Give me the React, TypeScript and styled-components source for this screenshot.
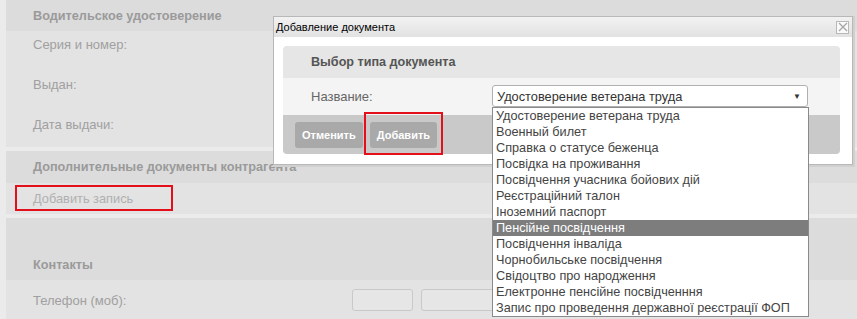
import styled, { createGlobalStyle } from "styled-components";

const GlobalStyle = createGlobalStyle`
  html, body {
    margin: 0;
    padding: 0;
    background: #ebebeb;
    font-family: "Liberation Sans", Arial, sans-serif;
    overflow: hidden;
  }
`;

const options = [
  "Удостоверение ветерана труда",
  "Военный билет",
  "Справка о статусе беженца",
  "Посвідка на проживання",
  "Посвідчення учасника бойових дій",
  "Реєстраційний талон",
  "Іноземний паспорт",
  "Пенсійне посвідчення",
  "Посвідчення інваліда",
  "Чорнобильське посвідчення",
  "Свідоцтво про народження",
  "Електронне пенсійне посвідченння",
  "Запис про проведення державної реєстрації ФОП",
];

const App = () => {
  return (
    <StPage>
      <GlobalStyle />

      <StSection>
        <StHeader>Водительское удостоверение</StHeader>
        <StBody $height={116}>
          <StRow>Серия и номер:</StRow>
          <StRow>Выдан:</StRow>
          <StRow>Дата выдачи:</StRow>
        </StBody>
      </StSection>

      <StSection>
        <StHeader $height={32}>Дополнительные документы контрагента</StHeader>
        <StLinkRow>Добавить запись</StLinkRow>
      </StSection>

      <StSection>
        <StHeader $height={62} $alignEnd>
          Контакты
        </StHeader>
        <StFieldRow>
          <StFieldLabel>Телефон (моб):</StFieldLabel>
          <StFakeInput $width={61} />
          <StFakeInput $width={120} />
        </StFieldRow>
      </StSection>

      <StModal>
        <StTitleBar>
          <span>Добавление документа</span>
          <StClose>
            <svg width="10" height="10" viewBox="0 0 10 10">
              <path d="M1 1 L9 9 M9 1 L1 9" stroke="#a8a8a8" strokeWidth="1.4" />
            </svg>
          </StClose>
        </StTitleBar>
        <StPanel>
          <StPanelHeader>Выбор типа документа</StPanelHeader>
          <StPanelRow>
            <StPanelLabel>Название:</StPanelLabel>
            <StSelect>
              <span>Удостоверение ветерана труда</span>
              <StArrow>▼</StArrow>
            </StSelect>
          </StPanelRow>
          <StPanelFooter>
            <StButton>Отменить</StButton>
            <StButton>Добавить</StButton>
          </StPanelFooter>
        </StPanel>
      </StModal>

      <StList>
        {options.map((o, i) => (
          <StOption key={o} $active={i === 7}>
            {o}
          </StOption>
        ))}
      </StList>

      <StMark style={{ left: 15, top: 185, width: 158, height: 26 }} />
      <StMark style={{ left: 364, top: 112, width: 79, height: 43 }} />
    </StPage>
  );
};

export default App;

const StPage = styled.div`
  position: relative;
  width: 857px;
  height: 319px;
  padding-left: 6px;
  box-sizing: border-box;
  overflow: hidden;
`;

const StSection = styled.div`
  margin-bottom: 4px;
  background: #e3e3e3;
`;

const StHeader = styled.div<{ $height?: number; $alignEnd?: boolean }>`
  height: ${(p) => p.$height ?? 31}px;
  box-sizing: border-box;
  display: flex;
  align-items: ${(p) => (p.$alignEnd ? "flex-end" : "center")};
  padding: ${(p) => (p.$alignEnd ? "0 0 8px 27px" : "0 0 0 27px")};
  background: #dcdcdc;
  color: #9a9a9a;
  font-size: 12.7px;
  font-weight: bold;
  white-space: nowrap;
`;

const StBody = styled.div<{ $height: number }>`
  height: ${(p) => p.$height}px;
  overflow: hidden;
`;

const StRow = styled.div`
  height: 40px;
  box-sizing: border-box;
  padding: 6px 0 0 27px;
  line-height: 16px;
  font-size: 13px;
  color: #a0a0a0;
`;

const StLinkRow = styled.div`
  height: 31px;
  display: flex;
  align-items: center;
  padding-left: 27px;
  font-size: 12.8px;
  color: #b0b0b0;
`;

const StFieldRow = styled.div`
  height: 40px;
  display: flex;
  align-items: center;
  padding-left: 27px;
  gap: 8px;
`;

const StFieldLabel = styled.div`
  width: 311px;
  font-size: 13px;
  color: #a0a0a0;
`;

const StFakeInput = styled.div<{ $width: number }>`
  width: ${(p) => p.$width}px;
  height: 22px;
  box-sizing: border-box;
  border: 1px solid #c9c9c9;
  border-radius: 3px;
  background: #e6e6e6;
`;

const StModal = styled.div`
  position: absolute;
  left: 273px;
  top: 16px;
  width: 580px;
  height: 149px;
  box-sizing: border-box;
  background: #fff;
  border: 1px solid #b8b8b8;
  box-shadow: 1px 1px 0 1px #d0d0d0;
`;

const StTitleBar = styled.div`
  height: 20px;
  display: flex;
  align-items: center;
  justify-content: space-between;
  padding: 0 3px 0 2px;
  background: linear-gradient(#f2f2f2, #e2e2e2);
  font-size: 11px;
  color: #000;
`;

const StClose = styled.div`
  width: 11px;
  height: 11px;
  border: 1px solid #b8b8b8;
  background: #fafafa;
  display: flex;
  align-items: center;
  justify-content: center;
`;

const StPanel = styled.div`
  margin: 9px 0 0 9px;
  width: 557px;
  border-radius: 4px;
  overflow: hidden;
`;

const StPanelHeader = styled.div`
  height: 32px;
  display: flex;
  align-items: center;
  padding-left: 28px;
  background: #e6e6e6;
  color: #555;
  font-size: 12.6px;
  font-weight: bold;
`;

const StPanelRow = styled.div`
  height: 37px;
  display: flex;
  align-items: center;
  padding-left: 28px;
  background: #f4f4f4;
`;

const StPanelLabel = styled.div`
  width: 181px;
  font-size: 13px;
  color: #666;
`;

const StSelect = styled.div`
  width: 316px;
  height: 22px;
  box-sizing: border-box;
  margin-top: -1px;
  display: flex;
  align-items: center;
  justify-content: space-between;
  padding: 0 6px 0 4px;
  background: #fff;
  border: 1px solid #b0b0b0;
  border-radius: 3px;
  font-size: 12.8px;
  color: #333;
`;

const StArrow = styled.span`
  font-size: 8px;
  color: #333;
`;

const StPanelFooter = styled.div`
  height: 39px;
  display: flex;
  align-items: center;
  gap: 7px;
  padding-left: 12px;
  background: #c9c9c9;
`;

const StButton = styled.div`
  height: 26px;
  padding: 0 7px;
  display: flex;
  align-items: center;
  border-radius: 3px;
  background: #a9a9a9;
  color: #fff;
  font-size: 11px;
  font-weight: bold;
`;

const StList = styled.div`
  position: absolute;
  left: 492px;
  top: 107px;
  width: 317px;
  box-sizing: border-box;
  border: 1px solid #8a8a8a;
  background: #fff;
`;

const StOption = styled.div<{ $active?: boolean }>`
  height: 16px;
  line-height: 16px;
  padding-left: 3px;
  font-size: 12.7px;
  white-space: nowrap;
  color: ${(p) => (p.$active ? "#fff" : "#444")};
  background: ${(p) => (p.$active ? "#7d7d7d" : "transparent")};
`;

const StMark = styled.div`
  position: absolute;
  box-sizing: border-box;
  border: 2px solid #e3101c;
  pointer-events: none;
`;
